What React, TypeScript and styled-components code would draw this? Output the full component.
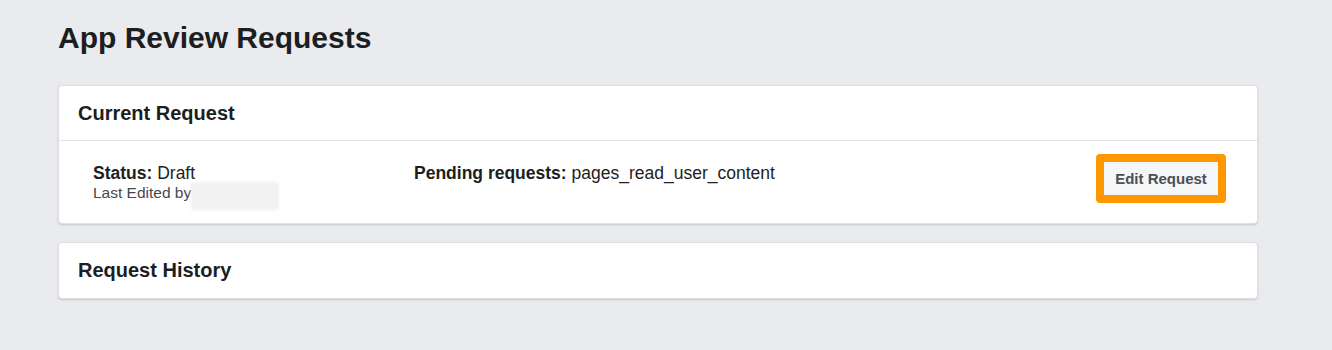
import * as React from 'react';
import styled, { createGlobalStyle } from 'styled-components';

const GlobalStyle = createGlobalStyle`
    body {
        margin: 0;
        background: #e9ebee;
        font-family: "Liberation Sans", Arial, sans-serif;
        color: #1d2129;
    }
`;

const Page = styled('div')`
    padding: 20px 74px 40px 58px;
    display: flex;
    flex-direction: column;
`;

const Title = styled('h1')`
    margin: 0 0 29px 0;
    font-size: 30px;
    line-height: 36px;
    font-weight: bold;
    color: #1c1e21;
`;

const Card = styled('div')`
    background: #fff;
    border: 1px solid #dddfe2;
    border-radius: 4px;
    box-shadow: 0 1px 2px rgba(0, 0, 0, 0.15);
    margin-bottom: 18px;
    width: 1200px;
    box-sizing: border-box;
`;

const CardHeader = styled('div')<{ $divider?: boolean; $height?: number }>`
    height: ${p => p.$height ?? 54}px;
    padding: 0 19px;
    display: flex;
    align-items: center;
    font-size: 20px;
    font-weight: bold;
    color: #1c1e21;
    border-bottom: ${p => (p.$divider ? '1px solid #e5e5e5' : 'none')};
`;

const CardBody = styled('div')`
    display: flex;
    align-items: flex-start;
    padding: 13px 31px 20px 34px;
`;

const StatusCol = styled('div')`
    width: 321px;
    padding-top: 9px;
`;

const StatusLine = styled('div')`
    font-size: 17.5px;
    line-height: 20px;
    color: #1c1e21;
`;

const Label = styled('span')`
    font-weight: bold;
`;

const EditedLine = styled('div')`
    font-size: 15.5px;
    line-height: 20px;
    color: #444950;
    display: flex;
    align-items: flex-start;
`;

const Blurred = styled('span')`
    display: inline-block;
    width: 88px;
    height: 28px;
    margin: -1px 0 -9px 0;
    background: #f2f2f2;
    filter: blur(1.5px);
`;

const PendingCol = styled('div')`
    flex: 1;
    padding-top: 9px;
    font-size: 17.5px;
    line-height: 20px;
    color: #1c1e21;
`;

const Highlight = styled('div')`
    border: 8px solid #ff9800;
    border-radius: 4px;
    display: flex;
`;

const EditButton = styled('button')`
    width: 114px;
    height: 33px;
    border: none;
    background: #f5f6f7;
    color: #4b4f56;
    font-family: "Liberation Sans", Arial, sans-serif;
    font-size: 15px;
    font-weight: bold;
    cursor: pointer;
    padding: 0;
`;

export default function App() {
    return (
        <>
            <GlobalStyle />
            <Page>
                <Title>App Review Requests</Title>
                <Card>
                    <CardHeader $divider>Current Request</CardHeader>
                    <CardBody>
                        <StatusCol>
                            <StatusLine><Label>Status:</Label> Draft</StatusLine>
                            <EditedLine>Last Edited by<Blurred /></EditedLine>
                        </StatusCol>
                        <PendingCol>
                            <Label>Pending requests:</Label> pages_read_user_content
                        </PendingCol>
                        <Highlight>
                            <EditButton>Edit Request</EditButton>
                        </Highlight>
                    </CardBody>
                </Card>
                <Card>
                    <CardHeader $height={55}>Request History</CardHeader>
                </Card>
            </Page>
        </>
    );
}
